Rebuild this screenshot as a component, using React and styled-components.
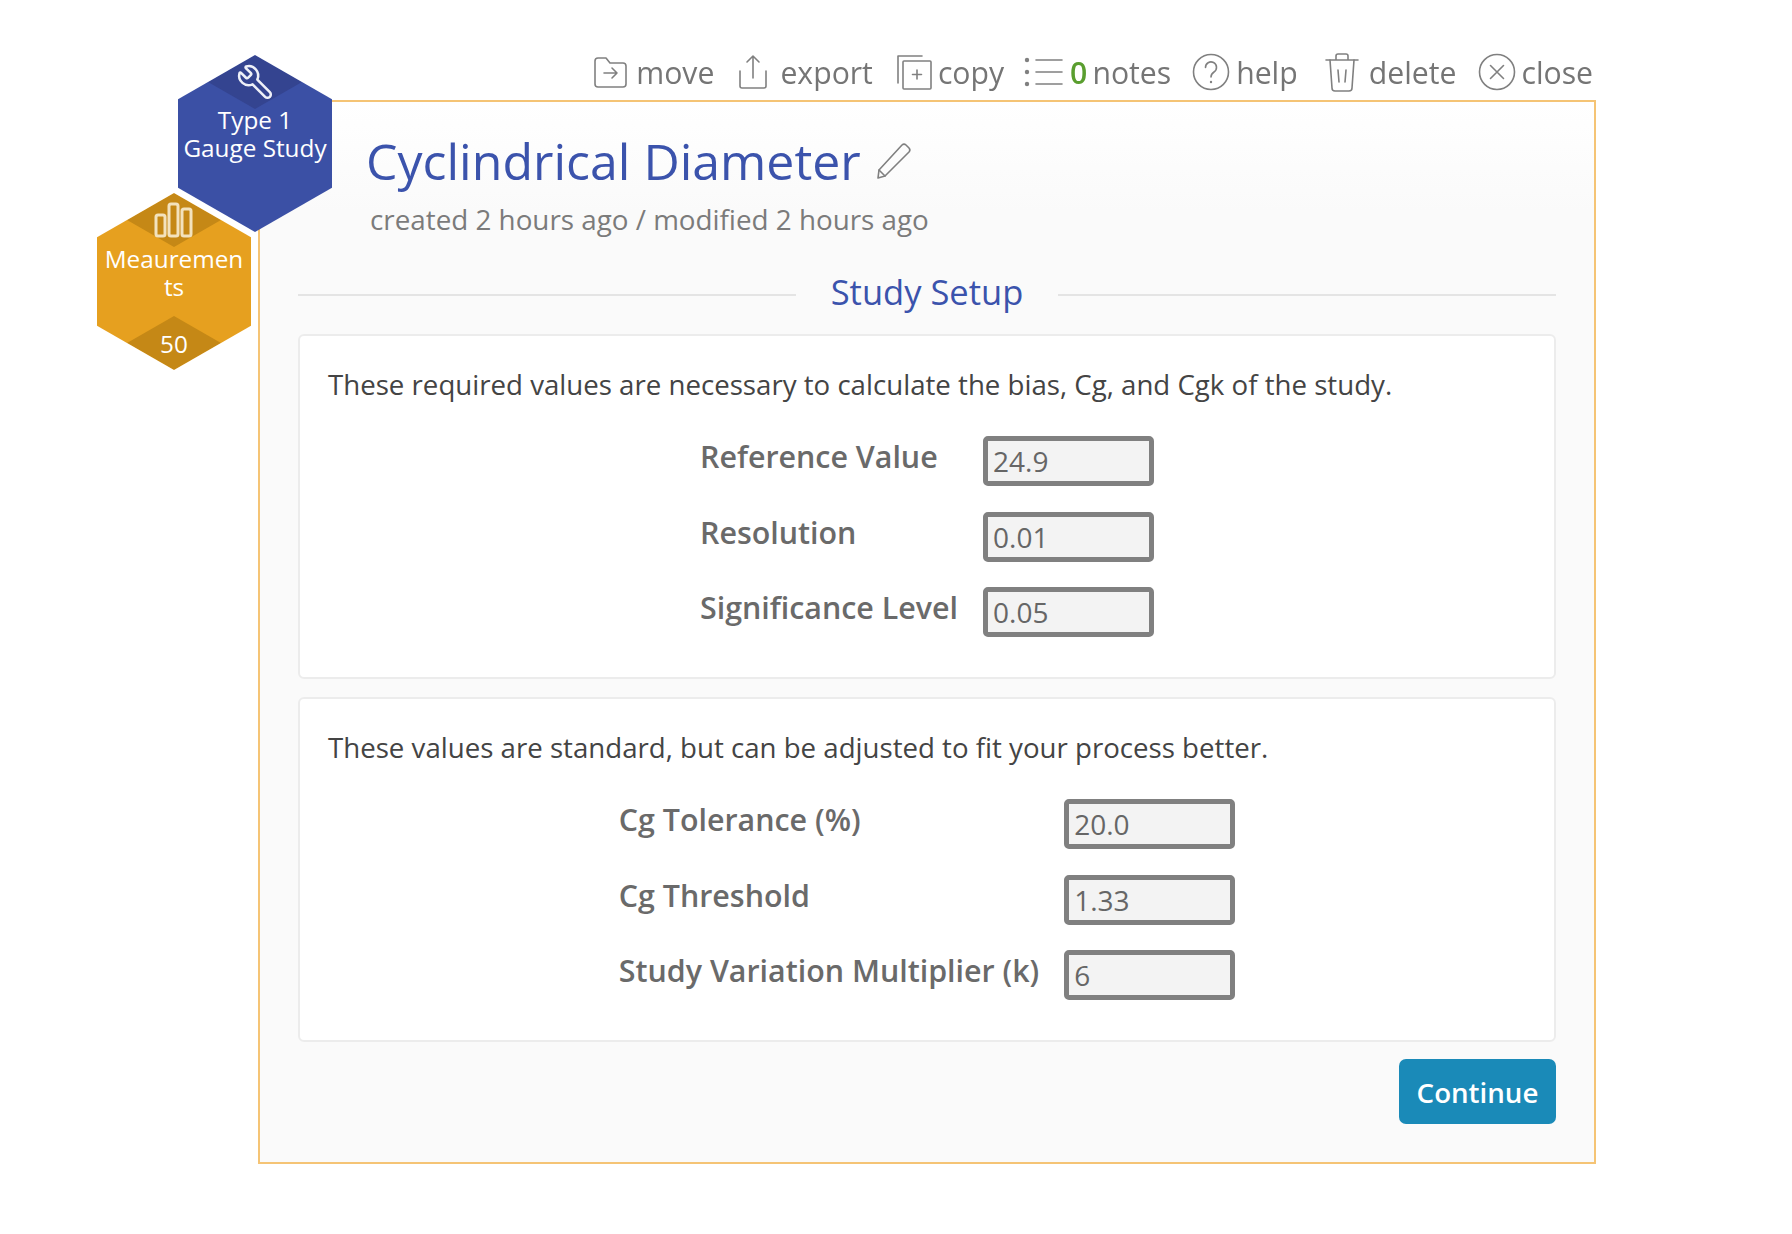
import React from 'react'
import styled, { createGlobalStyle } from 'styled-components'
import { Wrench } from 'lucide-react'

const GlobalStyle = createGlobalStyle`
  html, body {
    margin: 0;
    background: #fff;
    font-family: "Open Sans", "Liberation Sans", sans-serif;
  }
`

const Icon = ({ w, h, children }) => (
  <IconSvg width={w} height={h} viewBox={`0 0 ${w} ${h}`} fill="none" stroke="#808080" strokeWidth="1.6" strokeLinecap="round" strokeLinejoin="round">
    {children}
  </IconSvg>
)

const MoveIcon = () => (
  <Icon w={34} h={32}>
    <path d="M2 5a3 3 0 0 1 3-3h8l4 5h13a3 3 0 0 1 3 3v18a3 3 0 0 1-3 3H5a3 3 0 0 1-3-3z" />
    <path d="M11 17h13M19 12l5 5-5 5" />
  </Icon>
)

const ExportIcon = () => (
  <Icon w={30} h={36}>
    <path d="M15 2v22M9 8l6-6 6 6" />
    <path d="M2 17v15a2 2 0 0 0 2 2h22a2 2 0 0 0 2-2V17" />
  </Icon>
)

const CopyIcon = () => (
  <Icon w={36} h={36}>
    <path d="M26 2H2v27" />
    <rect x="7" y="7" width="28" height="28" rx="1" />
    <path d="M21 16v9M16.500 20.500h9" />
  </Icon>
)

const NotesIcon = () => (
  <Icon w={40} h={32}>
    <path d="M12 4h26M12 16h26M12 28h26" />
    <g fill="#808080" stroke="none">
      <circle cx="3" cy="4" r="2.200" />
      <circle cx="3" cy="16" r="2.200" />
      <circle cx="3" cy="28" r="2.200" />
    </g>
  </Icon>
)

const HelpIcon = () => (
  <Icon w={38} h={38}>
    <circle cx="19" cy="19" r="17.500" />
    <path d="M13.500 14.500a5.500 5.500 0 1 1 8.500 4.500c-2 1.300-3 2.500-3 5" />
    <circle cx="19" cy="29" r="1.200" fill="#808080" stroke="none" />
  </Icon>
)

const TrashIcon = () => (
  <Icon w={36} h={40}>
    <path d="M2 8h32M12 8V4a2 2 0 0 1 2-2h8a2 2 0 0 1 2 2v4" />
    <path d="M6 8l2 28a3 3 0 0 0 3 3h14a3 3 0 0 0 3-3l2-28" />
    <path d="M14 18l1 12M22 18l-1 12" />
  </Icon>
)

const CloseIcon = () => (
  <Icon w={38} h={38}>
    <circle cx="19" cy="19" r="17.500" />
    <path d="M12.500 12.500l13 13M25.500 12.500l-13 13" />
  </Icon>
)

const PencilIcon = () => (
  <Icon w={36} h={38}>
    <path d="M9 34l-7 2 1-8L26 3a3 3 0 0 1 4 0l3 3a3 3 0 0 1 0 4z" />
    <path d="M3 28l6 6" />
  </Icon>
)

const BarsIcon = () => (
  <svg width="40" height="36" viewBox="0 0 40 36" fill="none" stroke="#f3e2bd" strokeWidth="3">
    <rect x="2" y="13" width="9" height="21" rx="2" />
    <rect x="15" y="2" width="9" height="32" rx="2" />
    <rect x="28" y="7" width="9" height="27" rx="2" />
  </svg>
)

const actions = [
  { icon: <MoveIcon />, label: 'move', iconGap: 9, gap: 24 },
  { icon: <ExportIcon />, label: 'export', iconGap: 12, gap: 23 },
  { icon: <CopyIcon />, label: 'copy', iconGap: 6, gap: 20 },
  { icon: <NotesIcon />, label: 'notes', count: 0, iconGap: 6, gap: 21 },
  { icon: <HelpIcon />, label: 'help', iconGap: 6, gap: 26 },
  { icon: <TrashIcon />, label: 'delete', iconGap: 9, gap: 22 },
  { icon: <CloseIcon />, label: 'close', iconGap: 5, gap: 0 },
]

const requiredFields = [
  { label: 'Reference Value', value: '24.9' },
  { label: 'Resolution', value: '0.01' },
  { label: 'Significance Level', value: '0.05' },
]

const standardFields = [
  { label: 'Cg Tolerance (%)', value: '20.0' },
  { label: 'Cg Threshold', value: '1.33' },
  { label: 'Study Variation Multiplier (k)', value: '6' },
]

const FieldCard = ({ text, fields }) => (
  <Card>
    <CardText>{text}</CardText>
    <FieldGrid>
      {fields.map((f) => (
        <React.Fragment key={f.label}>
          <FieldLabel>{f.label}</FieldLabel>
          <FieldInput readOnly value={f.value} />
        </React.Fragment>
      ))}
    </FieldGrid>
  </Card>
)

const App = () => {
  return (
    <Page>
      <GlobalStyle />
      <Toolbar>
        {actions.map((a) => (
          <Action key={a.label} $gap={a.gap} $iconGap={a.iconGap}>
            {a.icon}
            {a.count !== undefined && <Count>{a.count}</Count>}
            <span>{a.label}</span>
          </Action>
        ))}
      </Toolbar>

      <Panel>
        <HexBlue>
          <HexCap />
          <HexIcon $top={8}>
            <Wrench size={38} strokeWidth={1.6} color="#eef0f8" style={{ transform: 'scaleX(-1)' }} />
          </HexIcon>
          <HexText $top={51}>Type 1<br />Gauge Study</HexText>
        </HexBlue>
        <HexOrange>
          <HexCap $orange />
          <HexFoot />
          <HexIcon $top={9}><BarsIcon /></HexIcon>
          <HexText $top={52}>Meauremen<br />ts</HexText>
          <HexCount>50</HexCount>
        </HexOrange>

        <Header>
          <Title>Cyclindrical Diameter <PencilIcon /></Title>
          <Meta>created 2 hours ago / modified 2 hours ago</Meta>
        </Header>

        <Section>
          <SectionLine />
          <SectionTitle>Study Setup</SectionTitle>
          <SectionLine />
        </Section>

        <FieldCard text="These required values are necessary to calculate the bias, Cg, and Cgk of the study." fields={requiredFields} />
        <FieldCard text="These values are standard, but can be adjusted to fit your process better." fields={standardFields} />

        <Footer>
          <ContinueButton>Continue</ContinueButton>
        </Footer>
      </Panel>
    </Page>
  )
}

const Page = styled.div`
  width: 1338px;
  margin-left: 258px;
  padding-top: 50px;
  filter: blur(0.6px);
`

const Toolbar = styled.div`
  display: flex;
  justify-content: flex-end;
  align-items: center;
  height: 44px;
  padding: 0 3px 6px 0;
  color: #757575;
  font-size: 30.200px;
`

const Action = styled.div`
  display: flex;
  align-items: center;
  gap: ${(p) => p.$iconGap}px;
  margin-right: ${(p) => p.$gap}px;
`

const IconSvg = styled.svg`
  flex: none;
`

const Count = styled.span`
  color: #5a9e2f;
  font-weight: 600;
  margin-right: -1px;
`

const Panel = styled.div`
  position: relative;
  box-sizing: border-box;
  height: 1064px;
  padding: 0 38px;
  border: 2px solid #f5c475;
  background: linear-gradient(#fff, #fafafa 110px);
`

const Hex = styled.div`
  position: absolute;
  width: 154px;
  height: 177px;
  clip-path: polygon(50% 0, 100% 25%, 100% 75%, 50% 100%, 0 75%, 0 25%);
  color: #fff;
  font-size: 24.300px;
  line-height: 28px;
  text-align: center;
`

const HexBlue = styled(Hex)`
  left: -82px;
  top: -47px;
  z-index: 2;
  background: #3b50a5;
`

const HexOrange = styled(Hex)`
  left: -163px;
  top: 91px;
  z-index: 1;
  background: #e6a01f;
`

const HexCap = styled.div`
  position: absolute;
  left: 30px;
  top: 0;
  width: 94px;
  height: 54px;
  clip-path: polygon(50% 0, 100% 50%, 50% 100%, 0 50%);
  background: ${(p) => (p.$orange ? '#c58816' : '#344490')};
`

const HexFoot = styled(HexCap)`
  top: auto;
  bottom: 0;
  background: #c58816;
`

const HexIcon = styled.div`
  position: absolute;
  left: 0;
  right: 0;
  top: ${(p) => p.$top}px;
  display: flex;
  justify-content: center;
`

const HexText = styled.div`
  position: absolute;
  left: 0;
  right: 0;
  top: ${(p) => p.$top}px;
  white-space: nowrap;
`

const HexCount = styled.div`
  position: absolute;
  left: 0;
  right: 0;
  bottom: 12px;
`

const Header = styled.div`
  padding: 25px 0 0 68px;
`

const Title = styled.h1`
  display: flex;
  align-items: center;
  gap: 15px;
  margin: 0;
  color: #3b53ac;
  font-size: 50px;
  font-weight: 400;
  line-height: 68px;
`

const Meta = styled.div`
  margin: 5px 0 0 4px;
  color: #7b7b7b;
  font-size: 27.800px;
  line-height: 38px;
`

const Section = styled.div`
  display: flex;
  align-items: center;
  gap: 35px;
  margin-top: 31px;
  margin-bottom: 21px;
  height: 44px;
`

const SectionLine = styled.div`
  flex: 1;
  height: 2px;
  margin-top: 7px;
  background: #e4e4e4;
`

const SectionTitle = styled.h2`
  margin: 0;
  color: #3b53ac;
  font-size: 34.500px;
  font-weight: 400;
`

const Card = styled.div`
  box-sizing: border-box;
  height: 345px;
  padding: 29px 28px 0;
  border: 2px solid #ececec;
  border-radius: 6px;
  background: #fff;

  & + & {
    margin-top: 18px;
  }
`

const CardText = styled.p`
  margin: 0;
  color: #444;
  font-size: 27.650px;
  line-height: 38px;
`

const FieldGrid = styled.div`
  display: grid;
  grid-template-columns: auto 171px;
  grid-auto-rows: 50px;
  justify-content: center;
  column-gap: 25px;
  row-gap: 25.500px;
  margin-top: 33px;
`

const FieldLabel = styled.label`
  color: #6a6a6a;
  font-size: 30.400px;
  font-weight: 600;
  line-height: 42px;
`

const FieldInput = styled.input`
  box-sizing: border-box;
  width: 171px;
  height: 50px;
  padding: 0 5px;
  border: 5px solid #808080;
  border-radius: 5px;
  outline: none;
  background: #f3f3f3;
  color: #666;
  font-family: inherit;
  font-size: 28px;
`

const Footer = styled.div`
  display: flex;
  justify-content: flex-end;
  margin-top: 17px;
`

const ContinueButton = styled.button`
  width: 157px;
  height: 65px;
  border: 0;
  border-radius: 7px;
  background: #1a8ab8;
  color: #fff;
  font-family: inherit;
  font-size: 27.700px;
  font-weight: 600;
`

export default App
